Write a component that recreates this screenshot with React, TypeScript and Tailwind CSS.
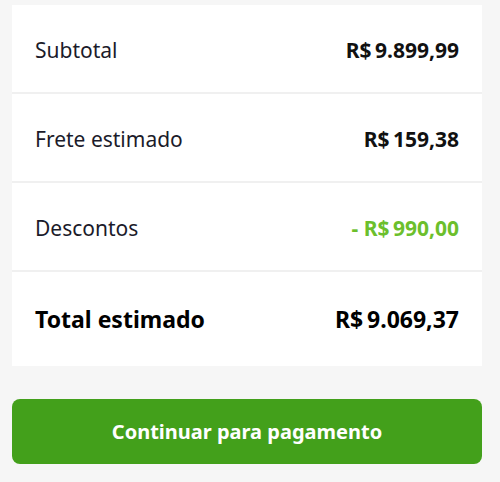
const rows = [
  { label: "Subtotal", value: "R$\u20099.899,99" },
  { label: "Frete estimado", value: "R$\u2009159,38" },
  { label: "Descontos", value: "- R$\u2009990,00", green: true },
];

export default function App() {
  return (
    <div className="min-h-[482px] bg-[#f6f6f6] pl-3 pr-[18px] pt-[5px] font-['Noto_Sans',sans-serif]">
      <div className="bg-white">
        {rows.map((r) => (
          <div
            key={r.label}
            className="flex h-[89px] items-center justify-between border-b-2 border-[#f0f0f0] px-[23px] pt-1 text-[21px]"
          >
            <span className="text-[#1b1b2a]">{r.label}</span>
            <span className={r.green ? "font-bold text-[#6cbf2c]" : "font-bold text-[#111]"}>{r.value}</span>
          </div>
        ))}
        <div className="flex h-[94px] items-center justify-between px-[23px] text-[23px] font-bold text-black">
          <span>Total estimado</span>
          <span>{"R$\u20099.069,37"}</span>
        </div>
      </div>
      <button className="mt-[33px] flex h-[65px] w-full items-center justify-center rounded-lg bg-[#43a01b] text-[20px] font-bold text-white">
        Continuar para pagamento
      </button>
    </div>
  );
}
